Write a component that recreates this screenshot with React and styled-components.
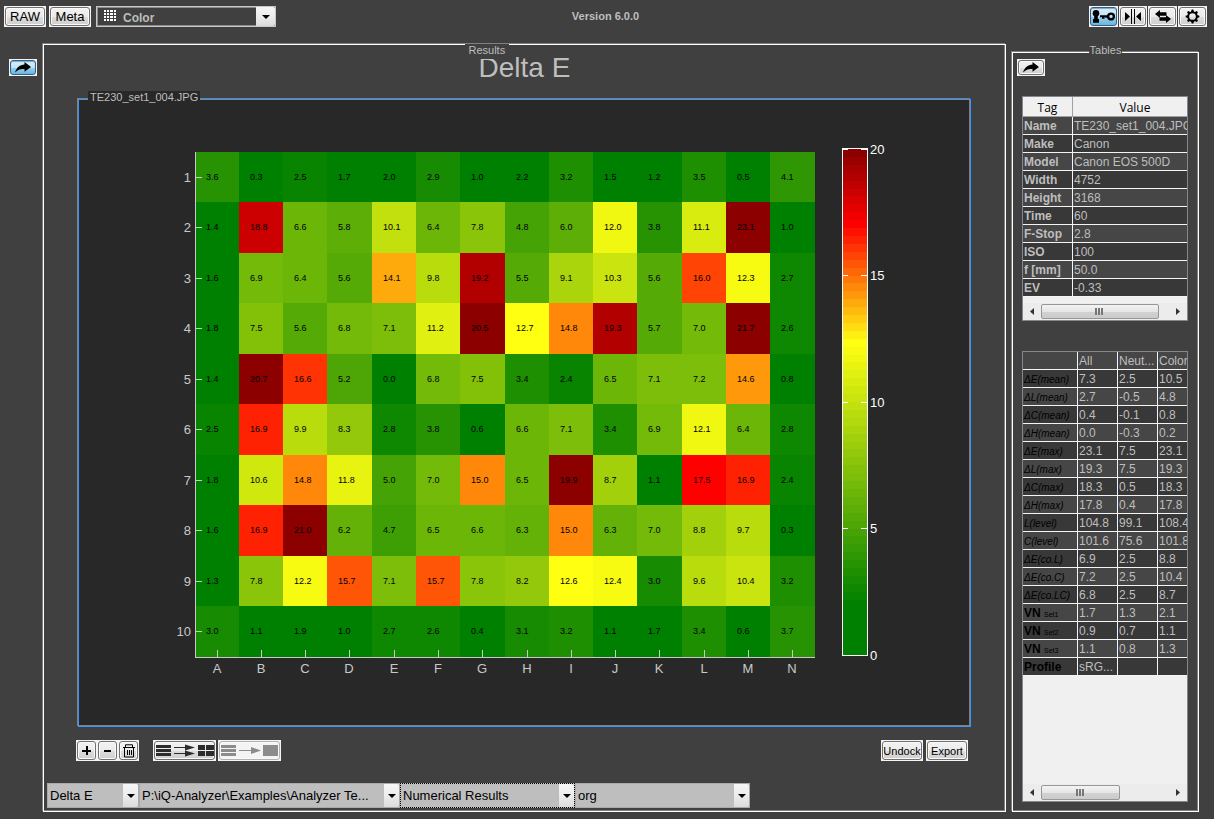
import React from "react";
import styled, { createGlobalStyle, css } from "styled-components";

const GlobalStyle = createGlobalStyle`
  * { box-sizing: border-box; }
  body {
    margin: 0;
    background: #404040;
    color: #bebebe;
    font-family: "Liberation Sans", Arial, sans-serif;
    font-size: 12px;
  }
`;

const Page = styled.div`
  min-height: 100vh;
  display: flex;
  flex-direction: column;
`;

const Header = styled.header`
  display: grid;
  grid-template-columns: 1fr auto 1fr;
  align-items: start;
  height: 44px;
  padding: 6px 7px 0 4px;
`;

const HeaderGroup = styled.div`
  display: flex;
  gap: ${(p) => p.$gap}px;
  justify-content: ${(p) => (p.$end ? "flex-end" : "flex-start")};
`;

const Version = styled.div`
  font-size: 11px;
  font-weight: bold;
  line-height: 21px;
`;

const Main = styled.main`
  flex: 1;
  display: flex;
  padding: 0 15px 7px 0;
`;

const Rail = styled.nav`
  width: 43px;
  padding: 15px 0 0 9px;
`;

/* Push button: white square base with a rounded face on it */
const ButtonBase = styled.button`
  display: flex;
  flex: none;
  width: ${(p) => p.$w}px;
  height: ${(p) => p.$h || 21}px;
  padding: 1px;
  border: 0;
  background: #f4f4f4;
  color: #000;
  font-family: inherit;
  font-size: ${(p) => p.$size || 11}px;
  white-space: nowrap;
`;

const Face = styled.span`
  flex: 1;
  display: flex;
  align-items: center;
  justify-content: center;
  height: 100%;
  border: 1px solid #707070;
  border-radius: 3px;
  box-shadow: inset 0 0 0 1px #fafafa;
  background: linear-gradient(#f2f2f2 0%, #ebebeb 50%, #dddddd 51%, #cfcfcf 100%);
  ${(p) =>
    p.$active &&
    css`
      border-color: #2c628b;
      box-shadow: inset 0 1px 1px #7fa6c0;
      background: linear-gradient(#dff1fb 0%, #c0e3f6 50%, #98d1ef 51%, #6db5dd 100%);
    `}
  ${(p) =>
    p.$muted &&
    css`
      border-color: #adb2b5;
      background: #f4f4f4;
    `}

  svg {
    flex: none;
  }
`;

function Button({ w, h, size, active, muted, label, children }) {
  return (
    <ButtonBase type="button" $w={w} $h={h} $size={size} aria-label={label} disabled={muted}>
      <Face $active={active} $muted={muted}>{children}</Face>
    </ButtonBase>
  );
}

/* Drop-downs */
const SelectWrap = styled.label`
  position: relative;
  display: block;
  width: ${(p) => p.$w}px;
  height: ${(p) => p.$h}px;
`;

const BarSelect = styled.select`
  appearance: none;
  display: block;
  width: 100%;
  height: 100%;
  padding: 0 18px 0 2px;
  border: 1px solid #aaaaaa;
  border-radius: 0;
  background: #bebebe;
  color: #000;
  font-family: inherit;
  font-size: 13px;
  text-overflow: ellipsis;
  ${(p) => p.$focused && css`border: 1px dotted #000;`}
`;

const ModeSelect = styled(BarSelect)`
  border: 2px solid #c8c8c8;
  outline: 1px solid #8c8c8c;
  outline-offset: -2px;
  padding: 2px 18px 0 25px;
  background: #404040;
  color: #bebebe;
  font-size: 12px;
  font-weight: bold;
`;

const DropArrow = styled.span`
  position: absolute;
  top: 1px;
  right: 1px;
  bottom: 1px;
  width: ${(p) => p.$w || 15}px;
  display: flex;
  align-items: center;
  justify-content: center;
  border-radius: 0 2px 2px 0;
  background: linear-gradient(#f6f6f6, #ececec 50%, #dcdcdc);
  pointer-events: none;
`;

const ModeIcon = styled.span`
  position: absolute;
  left: 8px;
  top: 4px;
  display: flex;
  pointer-events: none;
`;

const ArrowMark = () => (
  <svg width="8" height="4" viewBox="0 0 8 4"><path d="M0 0h8L4 4z" fill="#000" /></svg>
);

function Drop({ w, label, value, focused }) {
  return (
    <SelectWrap $w={w} $h={25}>
      <BarSelect aria-label={label} $focused={focused} defaultValue={value}>
        <option>{value}</option>
      </BarSelect>
      <DropArrow><ArrowMark /></DropArrow>
    </SelectWrap>
  );
}

/* Etched group boxes */
const Group = styled.section`
  position: relative;
  display: flex;
  flex-direction: column;
  border: 1px solid ${(p) => p.$line || "#fff"};
  box-shadow: -1px -1px 0 #808080, inset -1px -1px 0 #808080;
`;

const ResultsGroup = styled(Group)`
  flex: 1;
  min-width: 0;
`;

const FileGroup = styled(Group)`
  flex: 1;
  margin: 0 34px;
  background: #282828;
`;

const TablesGroup = styled(Group)`
  width: 187px;
  margin: 8px 0 0 6px;
  padding: 6px 10px 9px 9px;
`;

const Legend = styled.h2`
  position: absolute;
  top: ${(p) => p.$top}px;
  left: ${(p) => p.$left};
  margin: 0;
  padding: 0 ${(p) => p.$pad}px;
  background: ${(p) => p.$bg || "#404040"};
  font-size: 11px;
  font-weight: normal;
  line-height: 13px;
  white-space: nowrap;
`;

const ResultsLegend = styled(Legend)`
  padding-bottom: 2px;
`;

const CenterLegend = styled(Legend)`
  transform: translateX(-50%);
`;

const Title = styled.h1`
  margin: 7px 0 15px;
  text-align: center;
  font-size: 28px;
  font-weight: normal;
  line-height: 32px;
`;

const Toolbar = styled.div`
  display: flex;
  justify-content: space-between;
  margin: 13px 37px 22px 32px;
`;

const ToolGroup = styled.div`
  display: flex;
  gap: ${(p) => p.$gap || 0}px;
`;

const BottomBar = styled.div`
  display: flex;
  margin: 0 3px 3px;
`;

const Chart = styled.svg`
  display: block;
  flex: 1;
  width: 100%;
  min-height: 0;
`;

/* Tables */
const TagButton = styled.div`
  margin: 0 0 20px -5px;
`;

const TableBox = styled.div`
  display: flex;
  flex-direction: column;
  flex: ${(p) => (p.$grow ? 1 : "none")};
  margin-bottom: ${(p) => (p.$grow ? 0 : 30)}px;
  border: 1px solid #828790;
  background: #f0f0f0;
  overflow: hidden;
`;

const Data = styled.table`
  width: ${(p) => p.$w}px;
  table-layout: fixed;
  border-collapse: separate;
  border-spacing: 0;
  color: #bebebe;
  font-size: 12px;

  tbody tr:nth-child(odd) { background: #464646; }
  tbody tr:nth-child(even) { background: #383838; }
`;

const cell = css`
  height: 18px;
  padding: 2px 1px 0;
  border-right: 1px solid #f4f4f4;
  border-bottom: 1px solid #f4f4f4;
  line-height: 15px;
  text-align: left;
  white-space: nowrap;
  overflow: hidden;
`;

const Cell = styled.td`${cell}`;

const RowHead = styled.th`
  ${cell}
  font-weight: bold;
  ${(p) => p.$dark && css`color: #000;`}
  ${(p) =>
    p.$italic &&
    css`
      font-size: 10px;
      font-weight: normal;
      font-style: italic;
    `}
`;

const ColHead = styled.th`
  height: 20px;
  padding: 2px 0 0;
  border-right: 1px solid #a0a0a0;
  border-bottom: 1px solid #a0a0a0;
  background: #f0f0f0;
  color: #000;
  font-family: "Open Sans", "Noto Sans", sans-serif;
  font-size: 12px;
  font-weight: normal;
  line-height: 16px;
`;

const SetMark = styled.span`
  font-size: 7px;
  font-weight: normal;
  line-height: 0;
`;

const Filler = styled.div`
  flex: 1;
  min-height: 6px;
`;

const ScrollRow = styled.div`
  display: flex;
  align-items: center;
  height: 17px;
  background: #ececec;
`;

const ScrollEnd = styled.span`
  width: 18px;
  display: flex;
  justify-content: center;
`;

const Track = styled.div`
  flex: 1;
`;

const Thumb = styled.div`
  width: ${(p) => p.$w}%;
  height: 15px;
  display: flex;
  align-items: center;
  justify-content: center;
  border: 1px solid #979797;
  border-radius: 2px;
  background: linear-gradient(#f3f3f3, #e6e6e6 50%, #d2d2d2 51%, #cbcbcb);
`;

function Scroll({ w }) {
  return (
    <ScrollRow>
      <ScrollEnd><svg width="4" height="7"><path d="M4 0v7L0 3.5z" fill="#333" /></svg></ScrollEnd>
      <Track>
        <Thumb $w={w}>
          <svg width="9" height="7" shapeRendering="crispEdges">
            <path d="M0 0h2v7H0zM3 0h2v7H3zM6 0h2v7H6z" fill="#777" />
          </svg>
        </Thumb>
      </Track>
      <ScrollEnd><svg width="4" height="7"><path d="M0 0v7L4 3.5z" fill="#333" /></svg></ScrollEnd>
    </ScrollRow>
  );
}

/* Icons */
const ShareIcon = () => (
  <svg width="16" height="11" viewBox="0 0 16 11">
    <path d="M0 10.500C1.500 5.500 5 2.800 9.500 2.500V0L16 5 9.500 9.800V7C6 6.600 3 7.500 0 10.500z" fill="#000" />
  </svg>
);

const KeyIcon = () => (
  <svg width="24" height="15" viewBox="0 0 24 15">
    <circle cx="4" cy="4.300" r="3.300" />
    <path d="M2.200 6.500h3.600v3.500H7v3.800H1V10h1.200z" />
    <path d="M8 6.200h8v2.600h-2.500V8.200h-1v1.600H10V8.200H8z" />
    <circle cx="19" cy="7.500" r="2.900" fill="none" stroke="#000" strokeWidth="2.400" />
  </svg>
);

const SplitIcon = () => (
  <svg width="18" height="15" viewBox="0 0 18 15">
    <path d="M1 3l5 4.500L1 12zM17 3l-5 4.500 5 4.500zM7 0h1v15H7zM10 0h1v15h-1z" />
  </svg>
);

const SwapIcon = () => (
  <svg width="18" height="13" viewBox="0 0 18 13">
    <path d="M1 4l5-4v2.200h6.500v3.600H6V8zM17 9l-5 4v-2.200H5.500V7.200H12V5z" />
  </svg>
);

const GearIcon = () => (
  <svg width="15" height="15" viewBox="0 0 15 15">
    <circle cx="7.500" cy="7.500" r="4.300" fill="none" stroke="#000" strokeWidth="1.900" />
    {[0, 45, 90, 135, 180, 225, 270, 315].map((a) => (
      <path key={a} d="M5.900 3.200L6.700 0.600h1.600l0.800 2.600z" transform={`rotate(${a} 7.500 7.500)`} />
    ))}
  </svg>
);

const GridIcon = () => (
  <svg width="14" height="12" viewBox="0 0 14 12" shapeRendering="crispEdges">
    {[0, 3, 6, 9].map((y) =>
      [0, 3, 6, 10].map((x) => <rect key={`${x}-${y}`} x={x} y={y} width={x === 6 ? 3 : 2} height="2" fill="#fff" />)
    )}
  </svg>
);

const PlusIcon = () => (
  <svg width="9" height="9" shapeRendering="crispEdges"><path d="M4 0h2v4h3v2H6v3H4V6H0V4h4z" /></svg>
);

const MinusIcon = () => (
  <svg width="9" height="9" shapeRendering="crispEdges"><path d="M1 4h7v2H1z" /></svg>
);

const TrashIcon = () => (
  <svg width="14" height="14" viewBox="0 0 14 14" fill="none" stroke="#000">
    <path d="M1 3.500h12M3.500 3V0.800h7V3M2.500 4v9h9V4M5.500 6v5M7.500 6v5M9.500 6v5" />
  </svg>
);

const SpreadIcon = () => (
  <svg width="58" height="13" viewBox="0 0 58 13" fill="#2c2c2c">
    <path d="M0 1h15v3H0zM0 5h15v3H0zM0 9h15v3H0z" />
    <path d="M18 3h11V0.500l10 3L29 6.500V4H18zM18 9h11V6.500l10 3-10 3V10H18z" />
    <path d="M42 1h7v5h-7zM50 1h8v5h-8zM42 7h7v5h-7zM50 7h8v5h-8z" />
  </svg>
);

const MergeIcon = () => (
  <svg width="58" height="13" viewBox="0 0 58 13" fill="#8c8c8c">
    <path d="M0 1h15v3H0zM0 5h15v3H0zM0 9h15v3H0zM18 6h12V3l10 3.500-10 3.500V7H18zM42 1h15v11H42z" />
  </svg>
);

/* Heat map */
const DELTA_E = [
  [3.6, 0.3, 2.5, 1.7, 2.0, 2.9, 1.0, 2.2, 3.2, 1.5, 1.2, 3.5, 0.5, 4.1],
  [1.4, 18.8, 6.6, 5.8, 10.1, 6.4, 7.8, 4.8, 6.0, 12.0, 3.8, 11.1, 23.1, 1.0],
  [1.6, 6.9, 6.4, 5.6, 14.1, 9.8, 19.2, 5.5, 9.1, 10.3, 5.6, 16.0, 12.3, 2.7],
  [1.8, 7.5, 5.6, 6.8, 7.1, 11.2, 20.5, 12.7, 14.8, 19.3, 5.7, 7.0, 21.7, 2.6],
  [1.4, 20.7, 16.6, 5.2, 0.0, 6.8, 7.5, 3.4, 2.4, 6.5, 7.1, 7.2, 14.6, 0.8],
  [2.5, 16.9, 9.9, 8.3, 2.8, 3.8, 0.6, 6.6, 7.1, 3.4, 6.9, 12.1, 6.4, 2.8],
  [1.8, 10.6, 14.8, 11.8, 5.0, 7.0, 15.0, 6.5, 19.9, 8.7, 1.1, 17.5, 16.9, 2.4],
  [1.6, 16.9, 21.0, 6.2, 4.7, 6.5, 6.6, 6.3, 15.0, 6.3, 7.0, 8.8, 9.7, 0.3],
  [1.3, 7.8, 12.2, 15.7, 7.1, 15.7, 7.8, 8.2, 12.6, 12.4, 3.0, 9.6, 10.4, 3.2],
  [3.0, 1.1, 1.9, 1.0, 2.7, 2.6, 0.4, 3.1, 3.2, 1.1, 1.7, 3.4, 0.6, 3.7],
];
const COLUMNS = "ABCDEFGHIJKLMN".split("");
const LEVELS = Array.from({ length: 64 }, (_, i) => i);

function levelColor(i) {
  if (i < 7) return "rgb(0,128,0)";
  if (i <= 39) {
    const t = (i - 6) / 33;
    return `rgb(${Math.round(255 * t)},${Math.round(128 + 127 * t)},${Math.round(18 * t)})`;
  }
  if (i <= 54) {
    const t = (i - 39) / 15;
    return `rgb(255,${Math.round(255 * (1 - t))},${Math.round(18 * (1 - t))})`;
  }
  return `rgb(${Math.round(255 - ((i - 54) / 9) * 115)},0,0)`;
}

const valueColor = (v) => levelColor(v >= 19.8 ? 63 : Math.floor(v * 3.125));

const PLOT = { x: 116, y: 52, w: 620, h: 505 };
const BAR = { x: 764, y: 49, w: 24, h: 506 };

function HeatMap() {
  const edgeX = (c) => PLOT.x + Math.floor((c * PLOT.w) / 14);
  const edgeY = (r) => PLOT.y + Math.floor((r * PLOT.h) / 10);
  const midX = (c) => Math.floor((edgeX(c) + edgeX(c + 1)) / 2);
  const midY = (r) => Math.floor((edgeY(r) + edgeY(r + 1)) / 2);
  const barY = (v) => BAR.y + Math.floor(((20 - v) / 20) * BAR.h);
  return (
    <Chart viewBox="0 0 891 626" role="img" aria-label="Delta E" fontFamily="Liberation Sans, Arial, sans-serif">
      <g shapeRendering="crispEdges">
        {DELTA_E.map((row, r) =>
          row.map((v, c) => (
            <rect
              key={`${r}-${c}`}
              x={edgeX(c)}
              y={edgeY(r)}
              width={edgeX(c + 1) - edgeX(c)}
              height={edgeY(r + 1) - edgeY(r)}
              fill={valueColor(v)}
            />
          ))
        )}
        <path d={`M${PLOT.x} ${PLOT.y}h1v${PLOT.h}h${PLOT.w - 1}v1H${PLOT.x}z`} fill="#c8c8c8" />
        {DELTA_E.map((_, r) => <rect key={r} x={PLOT.x} y={midY(r)} width="7" height="1" fill="#c8c8c8" />)}
        {COLUMNS.map((k, c) => <rect key={k} x={midX(c)} y="550" width="1" height="7" fill="#c8c8c8" />)}
        {LEVELS.map((i) => {
          const top = BAR.y + Math.round(((63 - i) * BAR.h) / 64);
          const end = BAR.y + Math.round(((64 - i) * BAR.h) / 64);
          return <rect key={i} x={BAR.x} y={top} width={BAR.w} height={end - top} fill={levelColor(i)} />;
        })}
        <rect x={BAR.x - 0.5} y={BAR.y - 0.5} width={BAR.w + 1} height={BAR.h + 1} fill="none" stroke="#fff" />
        {[5, 10, 15, 20].map((v) => (
          <path key={v} d={`M${BAR.x} ${barY(v)}h5v1h-5zM${BAR.x + BAR.w - 6} ${barY(v)}h6v1h-6z`} fill="#fff" />
        ))}
      </g>
      <g fontSize="9" fill="#000">
        {DELTA_E.map((row, r) =>
          row.map((v, c) => <text key={`${r}-${c}`} x={midX(c) - 11} y={midY(r) + 3}>{v.toFixed(1)}</text>)
        )}
      </g>
      <g fontSize="13" fill="#c8c8c8">
        {DELTA_E.map((_, r) => <text key={r} x="112" y={midY(r) + 5} textAnchor="end">{r + 1}</text>)}
        {COLUMNS.map((k, c) => <text key={k} x={midX(c)} y="573" textAnchor="middle">{k}</text>)}
      </g>
      <g fontSize="13" fill="#fff">
        {[0, 5, 10, 15, 20].map((v) => <text key={v} x="791" y={barY(v) + 5}>{v}</text>)}
      </g>
    </Chart>
  );
}

const TAGS = [
  ["Name", "TE230_set1_004.JPG"],
  ["Make", "Canon"],
  ["Model", "Canon EOS 500D"],
  ["Width", "4752"],
  ["Height", "3168"],
  ["Time", "60"],
  ["F-Stop", "2.8"],
  ["ISO", "100"],
  ["f [mm]", "50.0"],
  ["EV", "-0.33"],
];

const STATS = [
  ["ΔE(mean)", "7.3", "2.5", "10.5"],
  ["ΔL(mean)", "2.7", "-0.5", "4.8"],
  ["ΔC(mean)", "0.4", "-0.1", "0.8"],
  ["ΔH(mean)", "0.0", "-0.3", "0.2"],
  ["ΔE(max)", "23.1", "7.5", "23.1"],
  ["ΔL(max)", "19.3", "7.5", "19.3"],
  ["ΔC(max)", "18.3", "0.5", "18.3"],
  ["ΔH(max)", "17.8", "0.4", "17.8"],
  ["L(level)", "104.8", "99.1", "108.4"],
  ["C(level)", "101.6", "75.6", "101.8"],
  ["ΔE(co.L)", "6.9", "2.5", "8.8"],
  ["ΔE(co.C)", "7.2", "2.5", "10.4"],
  ["ΔE(co.LC)", "6.8", "2.5", "8.7"],
  ["VN", "1.7", "1.3", "2.1", "Set1"],
  ["VN", "0.9", "0.7", "1.1", "Set2"],
  ["VN", "1.1", "0.8", "1.3", "Set3"],
  ["Profile", "sRG...", "", ""],
];

export default function App() {
  return (
    <Page>
      <GlobalStyle />
      <Header>
        <HeaderGroup $gap={5}>
          <HeaderGroup $gap={3}>
            <Button w={42} size={13}>RAW</Button>
            <Button w={42} size={13}>Meta</Button>
          </HeaderGroup>
          <SelectWrap $w={180} $h={21}>
            <ModeSelect aria-label="Mode" defaultValue="Color"><option>Color</option></ModeSelect>
            <ModeIcon><GridIcon /></ModeIcon>
            <DropArrow $w={19}><ArrowMark /></DropArrow>
          </SelectWrap>
        </HeaderGroup>
        <Version>Version 6.0.0</Version>
        <HeaderGroup $gap={1} $end>
          <Button w={29} label="Key" active><KeyIcon /></Button>
          <Button w={28} label="Split"><SplitIcon /></Button>
          <Button w={29} label="Swap"><SwapIcon /></Button>
          <Button w={29} label="Settings"><GearIcon /></Button>
        </HeaderGroup>
      </Header>

      <Main>
        <Rail><Button w={28} h={17} label="Show panel" active><ShareIcon /></Button></Rail>

        <ResultsGroup>
          <Title>Delta E</Title>
          <ResultsLegend $top={-1} $left="calc(50% - 60px)" $pad={4}>Results</ResultsLegend>
          <FileGroup $line="#3b95f7">
            <Legend $top={-9} $left="9px" $pad={2} $bg="#282828">TE230_set1_004.JPG</Legend>
            <HeatMap />
          </FileGroup>
          <Toolbar>
            <ToolGroup $gap={14}>
              <ToolGroup>
                <Button w={21} label="Add"><PlusIcon /></Button>
                <Button w={21} label="Remove"><MinusIcon /></Button>
                <Button w={21} label="Delete"><TrashIcon /></Button>
              </ToolGroup>
              <ToolGroup $gap={2}>
                <Button w={63} label="Split results"><SpreadIcon /></Button>
                <Button w={63} label="Merge results" muted><MergeIcon /></Button>
              </ToolGroup>
            </ToolGroup>
            <ToolGroup $gap={3}>
              <Button w={42}>Undock</Button>
              <Button w={42}>Export</Button>
            </ToolGroup>
          </Toolbar>
          <BottomBar>
            <Drop w={92} label="Metric" value="Delta E" />
            <Drop w={261} label="File" value="P:\iQ-Analyzer\Examples\Analyzer Te..." />
            <Drop w={175} label="View" value="Numerical Results" focused />
            <Drop w={175} label="Source" value="org" />
          </BottomBar>
        </ResultsGroup>

        <TablesGroup>
          <CenterLegend $top={-9} $left="50%" $pad={1}>Tables</CenterLegend>
          <TagButton><Button w={28} h={17} label="Hide tables"><ShareIcon /></Button></TagButton>
          <TableBox>
            <Data $w={175}>
              <colgroup><col width="50" /><col width="125" /></colgroup>
              <thead><tr><ColHead scope="col">Tag</ColHead><ColHead scope="col">Value</ColHead></tr></thead>
              <tbody>
                {TAGS.map(([tag, value]) => (
                  <tr key={tag}><RowHead scope="row">{tag}</RowHead><Cell>{value}</Cell></tr>
                ))}
              </tbody>
            </Data>
            <Filler />
            <Scroll w={92} />
          </TableBox>
          <TableBox $grow>
            <Data $w={175}>
              <colgroup><col width="55" /><col width="40" /><col width="40" /><col width="40" /></colgroup>
              <tbody>
                <tr><Cell /><Cell>All</Cell><Cell>Neut...</Cell><Cell>Color</Cell></tr>
                {STATS.map(([name, all, neutral, color, set]) => (
                  <tr key={name + (set || "")}>
                    <RowHead scope="row" $dark $italic={name.includes("(")}>
                      {name}{set && <> <SetMark>{set}</SetMark></>}
                    </RowHead>
                    <Cell>{all}</Cell>
                    <Cell>{neutral}</Cell>
                    <Cell>{color}</Cell>
                  </tr>
                ))}
              </tbody>
            </Data>
            <Filler />
            <Scroll w={62} />
          </TableBox>
        </TablesGroup>
      </Main>
    </Page>
  );
}
